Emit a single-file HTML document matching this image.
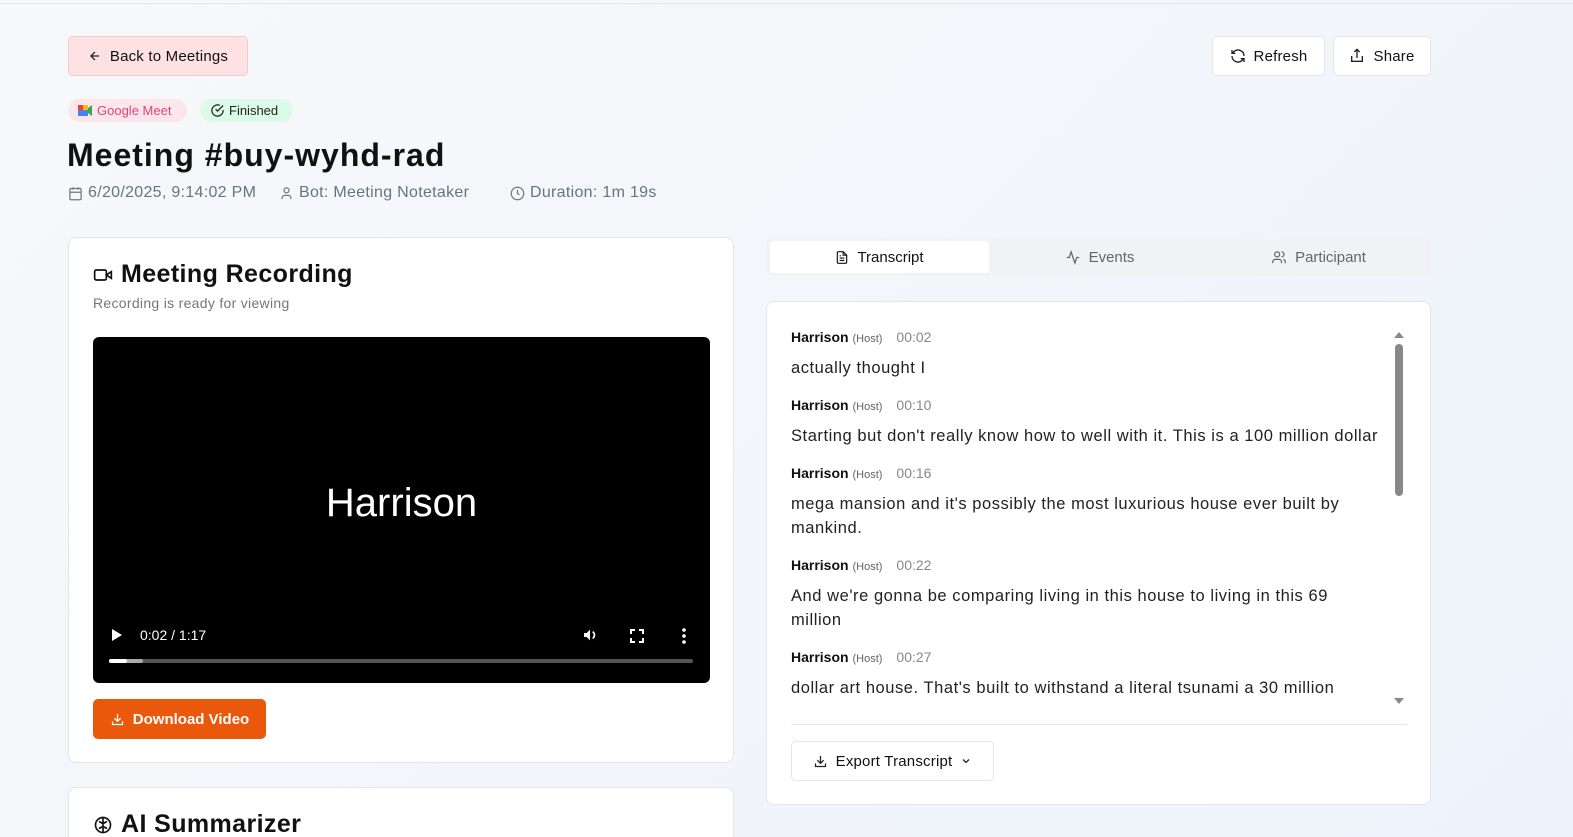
<!DOCTYPE html>
<html><head><style>
*{box-sizing:border-box;margin:0;padding:0}
html,body{width:1573px;height:837px;overflow:hidden}
body{background:linear-gradient(135deg,#f7f8fa,#eef3fb);font-family:"Liberation Sans",sans-serif;color:#111;position:relative}
.a{position:absolute}
.btn{position:absolute;border:1px solid #e3e5e8;background:#fff;border-radius:5px;font-size:15px;display:flex;align-items:center;justify-content:center;gap:8px;letter-spacing:0.2px}
.card{position:absolute;background:#fff;border:1px solid #e2e5ea;border-radius:8px;overflow:hidden}
svg{display:block}
.meta{font-size:16px;color:#6b7280;display:flex;align-items:center;gap:5px;letter-spacing:0.3px}
.nm{font-size:14px;font-weight:bold;color:#111;line-height:20px;height:20px;margin-top:15px}
.nm small{font-size:11px;color:#666;font-weight:normal}
.nm span{font-weight:normal;color:#888;font-size:14px;margin-left:14px}
.tx{font-size:16.5px;color:#222;line-height:24px;margin-top:9px;letter-spacing:0.55px}
</style></head><body>
<div class="a" style="left:0;top:3px;width:1573px;height:1px;background:#e2e5ea"></div>
<div class="btn" style="left:68px;top:36px;width:180px;height:40px;background:#fde1e3;border-color:#f5c9cd">
<svg width="14" height="14" viewBox="0 0 24 24" fill="none" stroke="#222" stroke-width="2.2"><path d="M19 12H5M12 19l-7-7 7-7"/></svg>Back to Meetings</div>
<div class="btn" style="left:1212px;top:36px;width:113px;height:40px">
<svg width="16" height="16" viewBox="0 0 24 24" fill="none" stroke="#222" stroke-width="2"><path d="M21 12a9 9 0 0 0-15-6.7L3 8M3 3v5h5M3 12a9 9 0 0 0 15 6.7l3-2.7M21 21v-5h-5"/></svg>Refresh</div>
<div class="btn" style="left:1333px;top:36px;width:98px;height:40px">
<svg width="16" height="16" viewBox="0 0 24 24" fill="none" stroke="#222" stroke-width="2"><path d="M4 12v8h16v-8M16 6l-4-4-4 4M12 2v13"/></svg>Share</div>
<div class="a" style="left:68px;top:99px;width:119px;height:23px;border-radius:12px;background:#fbe6ec;font-size:13px;color:#e0457b;display:flex;align-items:center;gap:4px;padding-left:10px">
<svg width="15" height="13" viewBox="0 0 15 13"><rect x="0" y="1" width="10" height="11" fill="#fbbc04"/><rect x="0" y="1" width="5" height="5" fill="#ea4335"/><rect x="0" y="6" width="10" height="6" fill="#4285f4"/><path d="M10 4l4-3v11l-4-3z" fill="#34a853"/></svg>Google Meet</div>
<div class="a" style="left:200px;top:99px;width:93px;height:23px;border-radius:12px;background:#dcfae8;font-size:13px;color:#222;display:flex;align-items:center;gap:4px;padding-left:10px">
<svg width="15" height="15" viewBox="0 0 24 24" fill="none" stroke="#222" stroke-width="2"><path d="M21 11.1V12a9 9 0 1 1-5.3-8.2"/><path d="M21 4L12 13l-3-3"/></svg>Finished</div>
<div class="a" style="left:67px;top:137px;font-size:32px;font-weight:bold;letter-spacing:1px">Meeting #buy-wyhd-rad</div>
<div class="a meta" style="left:68px;top:184px">
<svg width="15" height="15" viewBox="0 0 24 24" fill="none" stroke="#777" stroke-width="2"><rect x="3" y="4" width="18" height="18" rx="2"/><path d="M16 2v4M8 2v4M3 10h18"/></svg>6/20/2025, 9:14:02 PM</div>
<div class="a meta" style="left:279px;top:184px">
<svg width="15" height="15" viewBox="0 0 24 24" fill="none" stroke="#777" stroke-width="2"><circle cx="12" cy="7" r="4"/><path d="M5 21v-2a4 4 0 0 1 4-4h6a4 4 0 0 1 4 4v2"/></svg>Bot: Meeting Notetaker</div>
<div class="a meta" style="left:510px;top:184px">
<svg width="15" height="15" viewBox="0 0 24 24" fill="none" stroke="#777" stroke-width="2"><circle cx="12" cy="12" r="10"/><path d="M12 6v6l3 2"/></svg>Duration: 1m 19s</div>

<div class="card" style="left:68px;top:237px;width:666px;height:526px">
<div class="a" style="left:24px;top:22px;display:flex;align-items:center;gap:8px;font-size:25px;font-weight:bold;letter-spacing:0.4px">
<svg width="20" height="20" viewBox="0 0 24 24" fill="none" stroke="#111" stroke-width="2"><rect x="2" y="6" width="14" height="12" rx="2"/><path d="M22 8l-6 4 6 4z"/></svg>Meeting Recording</div>
<div class="a" style="left:24px;top:57px;font-size:14px;color:#777;letter-spacing:0.3px">Recording is ready for viewing</div>
<div class="a" style="left:24px;top:99px;width:617px;height:346px;background:#000;border-radius:6px">
<div class="a" style="left:0;width:100%;top:144px;text-align:center;color:#fff;font-size:40px">Harrison</div>
<svg class="a" style="left:18px;top:291px" width="12" height="14" viewBox="0 0 12 14"><path d="M1 1l10 6-10 6z" fill="#fff"/></svg>
<div class="a" style="left:47px;top:290px;color:#fff;font-size:14px">0:02 / 1:17</div>
<svg class="a" style="left:488px;top:290px" width="18" height="16" viewBox="0 0 24 24"><path d="M3 9v6h4l5 5V4L7 9z" fill="#fff"/><path d="M16 7a6 6 0 0 1 0 10" stroke="#fff" stroke-width="2.5" fill="none"/></svg>
<svg class="a" style="left:537px;top:292px" width="14" height="14" viewBox="0 0 14 14" fill="none" stroke="#fff" stroke-width="2"><path d="M1 5V1h4M9 1h4v4M13 9v4H9M5 13H1V9"/></svg>
<svg class="a" style="left:589px;top:291px" width="4" height="16" viewBox="0 0 4 16" fill="#fff"><circle cx="2" cy="2" r="1.8"/><circle cx="2" cy="8" r="1.8"/><circle cx="2" cy="14" r="1.8"/></svg>
<div class="a" style="left:16px;top:322px;width:584px;height:4px;background:#555;border-radius:2px"></div>
<div class="a" style="left:16px;top:322px;width:34px;height:4px;background:#aaa;border-radius:2px"></div>
<div class="a" style="left:16px;top:322px;width:18px;height:4px;background:#fff;border-radius:2px"></div>
</div>
<div class="a" style="left:24px;top:461px;width:173px;height:40px;background:#ea580c;border-radius:5px;color:#fff;font-size:15px;font-weight:bold;display:flex;align-items:center;justify-content:center;gap:8px">
<svg width="15" height="15" viewBox="0 0 24 24" fill="none" stroke="#fff" stroke-width="2"><path d="M4 15v5h16v-5M7 10l5 5 5-5M12 15V3"/></svg>Download Video</div>
</div>
<div class="card" style="left:68px;top:787px;width:666px;height:80px">
<div class="a" style="left:24px;top:22px;display:flex;align-items:center;gap:8px;font-size:25px;font-weight:bold;letter-spacing:0.4px">
<svg width="20" height="20" viewBox="0 0 24 24" fill="none" stroke="#111" stroke-width="2"><circle cx="12" cy="12" r="9"/><path d="M12 3v18M7 8c2 0 3 2 5 2M17 8c-2 0-3 2-5 2M7 16c2 0 3-2 5-2M17 16c-2 0-3-2-5-2"/></svg>AI Summarizer</div>
</div>

<div class="a" style="left:766px;top:238px;width:665px;height:38px;background:#f1f2f4;border-radius:6px"></div>
<div class="a" style="left:770px;top:241px;width:219px;height:32px;background:#fff;border-radius:4px;display:flex;align-items:center;justify-content:center;gap:8px;font-size:15px;color:#111">
<svg width="14" height="15" viewBox="0 0 24 24" fill="none" stroke="#111" stroke-width="2"><path d="M14 2H6a2 2 0 0 0-2 2v16a2 2 0 0 0 2 2h12a2 2 0 0 0 2-2V8z"/><path d="M14 2v6h6M8 13h8M8 17h8M8 9h2"/></svg>Transcript</div>
<div class="a" style="left:990px;top:241px;width:219px;height:32px;display:flex;align-items:center;justify-content:center;gap:8px;font-size:15px;color:#666">
<svg width="16" height="15" viewBox="0 0 24 24" fill="none" stroke="#666" stroke-width="2"><path d="M22 12h-4l-3 9L9 3l-3 9H2"/></svg>Events</div>
<div class="a" style="left:1209px;top:241px;width:219px;height:32px;display:flex;align-items:center;justify-content:center;gap:8px;font-size:15px;color:#666">
<svg width="16" height="15" viewBox="0 0 24 24" fill="none" stroke="#666" stroke-width="2"><circle cx="9" cy="7" r="4"/><path d="M2 21v-2a4 4 0 0 1 4-4h6a4 4 0 0 1 4 4v2M16 3a4 4 0 0 1 0 8M22 21v-2a4 4 0 0 0-3-3.9"/></svg>Participant</div>

<div class="card" style="left:766px;top:301px;width:665px;height:504px">
<div class="a" style="left:24px;top:10px;width:600px">
<div class="nm">Harrison <small>(Host)</small><span>00:02</span></div>
<div class="tx">actually thought I</div>
<div class="nm">Harrison <small>(Host)</small><span>00:10</span></div>
<div class="tx" style="white-space:nowrap">Starting but don't really know how to well with it. This is a 100 million dollar</div>
<div class="nm">Harrison <small>(Host)</small><span>00:16</span></div>
<div class="tx">mega mansion and it's possibly the most luxurious house ever built by<br>mankind.</div>
<div class="nm">Harrison <small>(Host)</small><span>00:22</span></div>
<div class="tx">And we're gonna be comparing living in this house to living in this 69<br>million</div>
<div class="nm">Harrison <small>(Host)</small><span>00:27</span></div>
<div class="tx" style="white-space:nowrap">dollar art house. That's built to withstand a literal tsunami a 30 million</div>
</div>
<div class="a" style="left:0;top:398px;width:660px;height:110px;background:#fff"></div>
<svg class="a" style="left:627px;top:29px" width="10" height="8"><path d="M0 7l5-6 5 6z" fill="#888"/></svg>
<div class="a" style="left:628px;top:42px;width:8px;height:152px;background:#888;border-radius:4px"></div>
<svg class="a" style="left:627px;top:395px" width="10" height="8"><path d="M0 1l5 6 5-6z" fill="#888"/></svg>
<div class="a" style="left:24px;top:422px;width:616px;height:1px;background:#e2e5ea"></div>
<div class="btn" style="left:24px;top:439px;width:203px;height:40px">
<svg width="15" height="15" viewBox="0 0 24 24" fill="none" stroke="#222" stroke-width="2"><path d="M4 15v5h16v-5M7 10l5 5 5-5M12 15V3"/></svg>Export Transcript
<svg width="12" height="12" viewBox="0 0 24 24" fill="none" stroke="#222" stroke-width="2.5"><path d="M6 9l6 6 6-6"/></svg></div>
</div>
</body></html>
